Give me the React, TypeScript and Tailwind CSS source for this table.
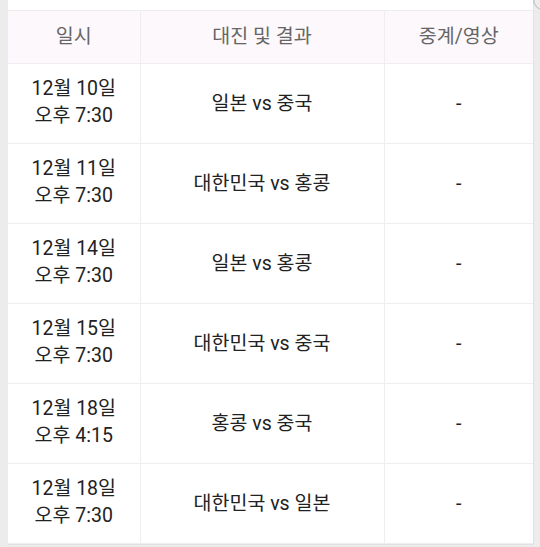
import React from 'react';

interface Match {
  date: string;
  time: string;
  game: string;
  media: string;
}

const matches: Match[] = [
  { date: '12월 10일', time: '오후 7:30', game: '일본 vs 중국', media: '-' },
  { date: '12월 11일', time: '오후 7:30', game: '대한민국 vs 홍콩', media: '-' },
  { date: '12월 14일', time: '오후 7:30', game: '일본 vs 홍콩', media: '-' },
  { date: '12월 15일', time: '오후 7:30', game: '대한민국 vs 중국', media: '-' },
  { date: '12월 18일', time: '오후 4:15', game: '홍콩 vs 중국', media: '-' },
  { date: '12월 18일', time: '오후 7:30', game: '대한민국 vs 일본', media: '-' },
];

const font = { fontFamily: 'Roboto, "Noto Sans CJK KR", sans-serif' };

const App: React.FC = () => {
  return (
    <div
      className="relative w-[540px] h-[547px] overflow-hidden bg-[#ececec] pl-2 pr-[6px]"
      style={font}
    >
      {/* edge of a floating element, top right */}
      <div className="absolute -right-[17px] -top-[13px] w-[24px] h-[24px] rounded-full border border-[#b8b8b8] bg-[#ececec]"></div>

      <div className="bg-white pt-[10px] border-r border-b border-[#e2e2e2]">
        <table className="w-full border-collapse table-fixed">
          <colgroup>
            <col className="w-[132px]" />
            <col className="w-[244px]" />
            <col />
          </colgroup>
          <thead>
            <tr className="h-[53px] bg-[#fcf8fb]">
              <th className="border-t border-r border-b border-[#f0edf0] font-normal text-[19.5px] text-[#666]">일시</th>
              <th className="border border-[#f0edf0] font-normal text-[19.5px] text-[#666]">대진 및 결과</th>
              <th className="border-t border-l border-b border-[#f0edf0] font-normal text-[19.5px] text-[#666]">중계/영상</th>
            </tr>
          </thead>
          <tbody>
            {matches.map((m, i) => (
              <tr key={i} className="h-[80px]">
                <td className="border-r border-b border-[#f0edf0] pb-1 text-center text-[19.5px] leading-[27px] text-[#222]">
                  {m.date}
                  <br />
                  {m.time}
                </td>
                <td className="border-x border-b border-[#f0edf0] text-center text-[19.5px] text-[#222]">{m.game}</td>
                <td className="border-l border-b border-[#f0edf0] text-center text-[19.5px] text-[#222]">{m.media}</td>
              </tr>
            ))}
          </tbody>
        </table>
      </div>
    </div>
  );
};

export default App;
